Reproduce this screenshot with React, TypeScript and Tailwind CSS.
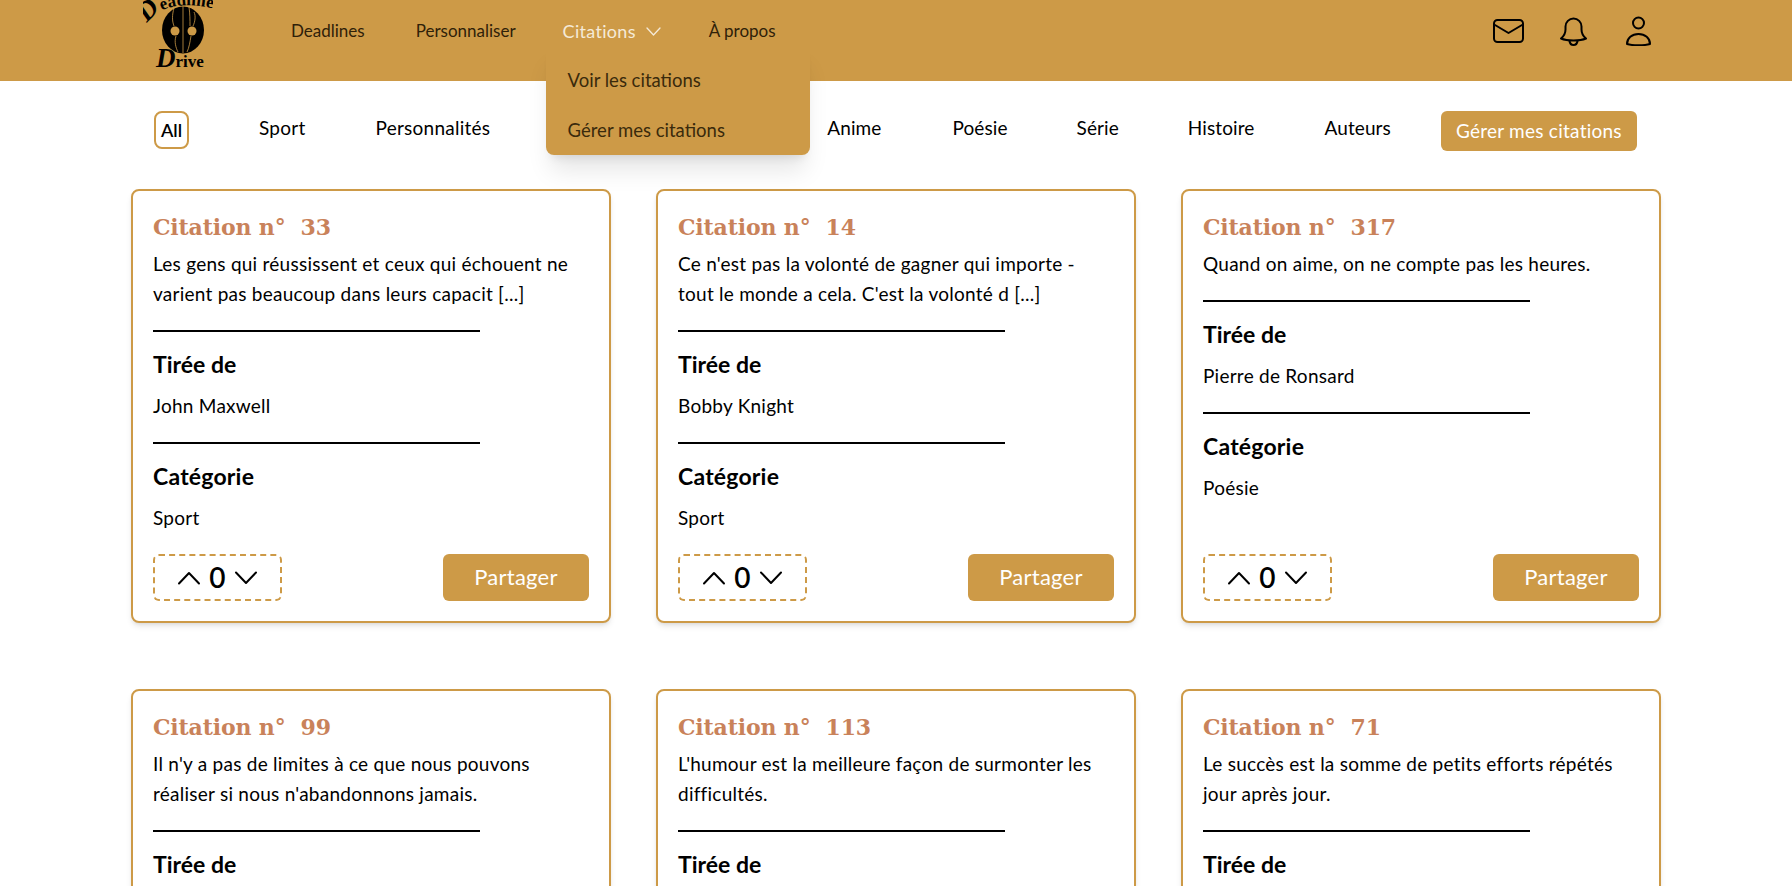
type Quote = { id: number; text: string[]; source: string; category: string };

const quotes: Quote[] = [
  { id: 33, text: ["Les gens qui réussissent et ceux qui échouent ne", "varient pas beaucoup dans leurs capacit [...]"], source: "John Maxwell", category: "Sport" },
  { id: 14, text: ["Ce n'est pas la volonté de gagner qui importe -", "tout le monde a cela. C'est la volonté d [...]"], source: "Bobby Knight", category: "Sport" },
  { id: 317, text: ["Quand on aime, on ne compte pas les heures."], source: "Pierre de Ronsard", category: "Poésie" },
  { id: 99, text: ["Il n'y a pas de limites à ce que nous pouvons", "réaliser si nous n'abandonnons jamais."], source: "Anonyme", category: "Sport" },
  { id: 113, text: ["L'humour est la meilleure façon de surmonter les", "difficultés."], source: "Anonyme", category: "Série" },
  { id: 71, text: ["Le succès est la somme de petits efforts répétés", "jour après jour."], source: "Anonyme", category: "Sport" },
];

function Logo() {
  return (
    <svg width="70" height="81" viewBox="0 0 70 81" className="shrink-0">
      <defs>
        <path id="logo-arc" d="M5 24 Q10 13 22 9 Q42 2 68 8" fill="none" />
      </defs>
      <text fontFamily="'Liberation Serif', serif" fontWeight="700" fill="#000">
        <textPath href="#logo-arc">
          <tspan fontSize="27" fontStyle="italic">D</tspan>
          <tspan fontSize="17">eadline</tspan>
        </textPath>
      </text>
      <ellipse cx="40" cy="30" rx="21" ry="23.500" fill="#000" />
      <circle cx="32" cy="31" r="4.500" fill="#cd9a47" />
      <circle cx="49" cy="31" r="4.500" fill="#cd9a47" />
      <path d="M31 8C29 15 29 21 31 26M33 36C31 42 33 48 35 52M40 6V53M46 7C47 14 47 20 47 26M51 12C53 16 52 22 50 26M48 36C47 42 46 48 44 52" fill="none" stroke="#cd9a47" strokeWidth="0.8" />
      <text x="13" y="67" fontFamily="'Liberation Serif', serif" fontWeight="700" fill="#000">
        <tspan fontSize="27" fontStyle="italic">D</tspan>
        <tspan fontSize="17">rive</tspan>
      </text>
    </svg>
  );
}

function MailIcon() {
  return (
    <svg width="31" height="24" viewBox="0 0 31 24" fill="none" stroke="#000" strokeWidth="2" strokeLinecap="round" strokeLinejoin="round">
      <rect x="1" y="1" width="29" height="22" rx="3.500" />
      <path d="M2 6l13.500 8L29 6" />
    </svg>
  );
}

function BellIcon() {
  return (
    <svg width="27" height="29" viewBox="0 0 27 29" fill="none" stroke="#000" strokeWidth="2" strokeLinecap="round" strokeLinejoin="round">
      <path d="M1 21.500c3-2.500 4.500-5 4.500-9V9.500a8 8 0 0 1 16 0v3c0 4 1.500 6.500 4.500 9-3.500 1.500-7.500 2-12.500 2s-9-.5-12.500-2z" />
      <path d="M9.500 24c.3 2.300 2 4 4 4s3.700-1.700 4-4" />
    </svg>
  );
}

function UserIcon() {
  return (
    <svg width="25" height="30" viewBox="0 0 25 30" fill="none" stroke="#000" strokeWidth="2" strokeLinecap="round" strokeLinejoin="round">
      <circle cx="12.500" cy="7" r="5.500" />
      <path d="M1 28c0-6 5-10 11.500-10S24 22 24 28c-3 1-7 1.300-11.500 1.300S4 29 1 28z" />
    </svg>
  );
}

function Header() {
  return (
    <header className="relative z-10 h-[81px] bg-[#cd9a47] flex pl-[143px] pr-[141px]">
      <Logo />
      <nav className="ml-[78px] flex items-center h-[62px] text-[17px] text-[#2f2109]">
        <a>Deadlines</a>
        <a className="ml-[51px]">Personnaliser</a>
        <div className="relative ml-[47px]">
          <a className="flex items-center gap-[10px] text-[#f5ead8] text-[18px] tracking-[0.3px]">
            Citations
            <svg width="15" height="9" viewBox="0 0 15 9" fill="none" stroke="#f5ead8" strokeWidth="1.300" strokeLinecap="round" strokeLinejoin="round">
              <path d="M1 1l6.500 7L14 1" />
            </svg>
          </a>
          <div className="absolute left-[-17px] top-[26px] w-[264px] pt-[21px] pl-[22px] bg-[#cd9a47] rounded-b-lg shadow-xl text-[18.500px] text-[#3a2a0c]">
            <div className="h-[50px] leading-[30px]">Voir les citations</div>
            <div className="h-[40px] leading-[30px] whitespace-nowrap">Gérer mes citations</div>
          </div>
        </div>
        <a className="ml-[48px]">À propos</a>
      </nav>
      <div className="ml-auto flex items-start pt-[16px]">
        <div className="mt-[3px]"><MailIcon /></div>
        <div className="mt-[1px] ml-[36px]"><BellIcon /></div>
        <div className="ml-[39px]"><UserIcon /></div>
      </div>
    </header>
  );
}

function Filters() {
  return (
    <div className="mt-[30px] ml-[154px] flex items-center h-[40px] text-[19px] tracking-[0.25px] text-black">
      <span className="flex items-center justify-center w-[35px] h-[38px] mt-[-2px] border-2 border-[#cd9a47] rounded-lg font-semibold text-[18px] tracking-normal">All</span>
      <div className="ml-[70px] flex items-center gap-[70px] mt-[-6px]">
        <a>Sport</a>
        <a>Personnalités</a>
        <span className="w-[197px]" />
        <div className="flex items-center gap-[69px] tracking-[0.1px]">
          <a>Anime</a>
          <a className="ml-[2px]">Poésie</a>
          <a>Série</a>
          <a>Histoire</a>
          <a className="ml-[1px]">Auteurs</a>
        </div>
      </div>
      <button className="ml-[50px] h-[40px] w-[196px] bg-[#cd9a47] text-white rounded-md">Gérer mes citations</button>
    </div>
  );
}

function QuoteCard({ quote }: { quote: Quote }) {
  return (
    <div className="flex flex-col border-2 border-[#cd9a47] rounded-lg bg-white shadow-md pt-[16px] pb-[20px] px-[20px] text-[19px] tracking-[0.25px] leading-[30px] text-black">
      <h2 className="font-['DejaVu_Serif',serif] font-bold text-[22px] leading-[36px] tracking-[-0.15px] text-[#c9825a] whitespace-pre relative top-[2px]">
        Citation n°  {quote.id}
      </h2>
      <p className="mt-[6px]">
        {quote.text.map((line) => (
          <span key={line} className="block whitespace-nowrap">{line}</span>
        ))}
      </p>
      <hr className="mt-[21px] w-[327px] border-t-2 border-black" />
      <h3 className="mt-[16px] text-[23px] leading-[32px] font-bold tracking-normal">Tirée de</h3>
      <p className="mt-[11px]">{quote.source}</p>
      <hr className="mt-[21px] w-[327px] border-t-2 border-black" />
      <h3 className="mt-[16px] text-[23px] leading-[32px] font-bold tracking-[0.2px]">Catégorie</h3>
      <p className="mt-[11px]">{quote.category}</p>
      <div className="mt-auto pt-[21px] flex items-center justify-between">
        <div className="w-[129px] h-[47px] flex items-center justify-center gap-[8px] border-2 border-dashed border-[#cd9a47] rounded-md">
          <svg width="24" height="14" viewBox="0 0 24 14" fill="none" stroke="#000" strokeWidth="2" strokeLinecap="round" strokeLinejoin="round">
            <path d="M2 12.500L12 2l10 10.500" />
          </svg>
          <span className="text-[28px] font-semibold leading-[30px] pb-[2px]">0</span>
          <svg width="24" height="14" viewBox="0 0 24 14" fill="none" stroke="#000" strokeWidth="2" strokeLinecap="round" strokeLinejoin="round">
            <path d="M2 1.500L12 12 22 1.500" />
          </svg>
        </div>
        <button className="w-[146px] h-[47px] pb-[2px] bg-[#cd9a47] text-white text-[22px] rounded-md">Partager</button>
      </div>
    </div>
  );
}

export default function App() {
  return (
    <div className="h-screen overflow-hidden bg-white font-['Lato','Noto_Sans',sans-serif]">
      <Header />
      <Filters />
      <main className="mt-[38px] ml-[131px] grid grid-cols-3 w-[1530px] gap-x-[45px] gap-y-[66px]">
        {quotes.map((quote) => (
          <QuoteCard key={quote.id} quote={quote} />
        ))}
      </main>
    </div>
  );
}
